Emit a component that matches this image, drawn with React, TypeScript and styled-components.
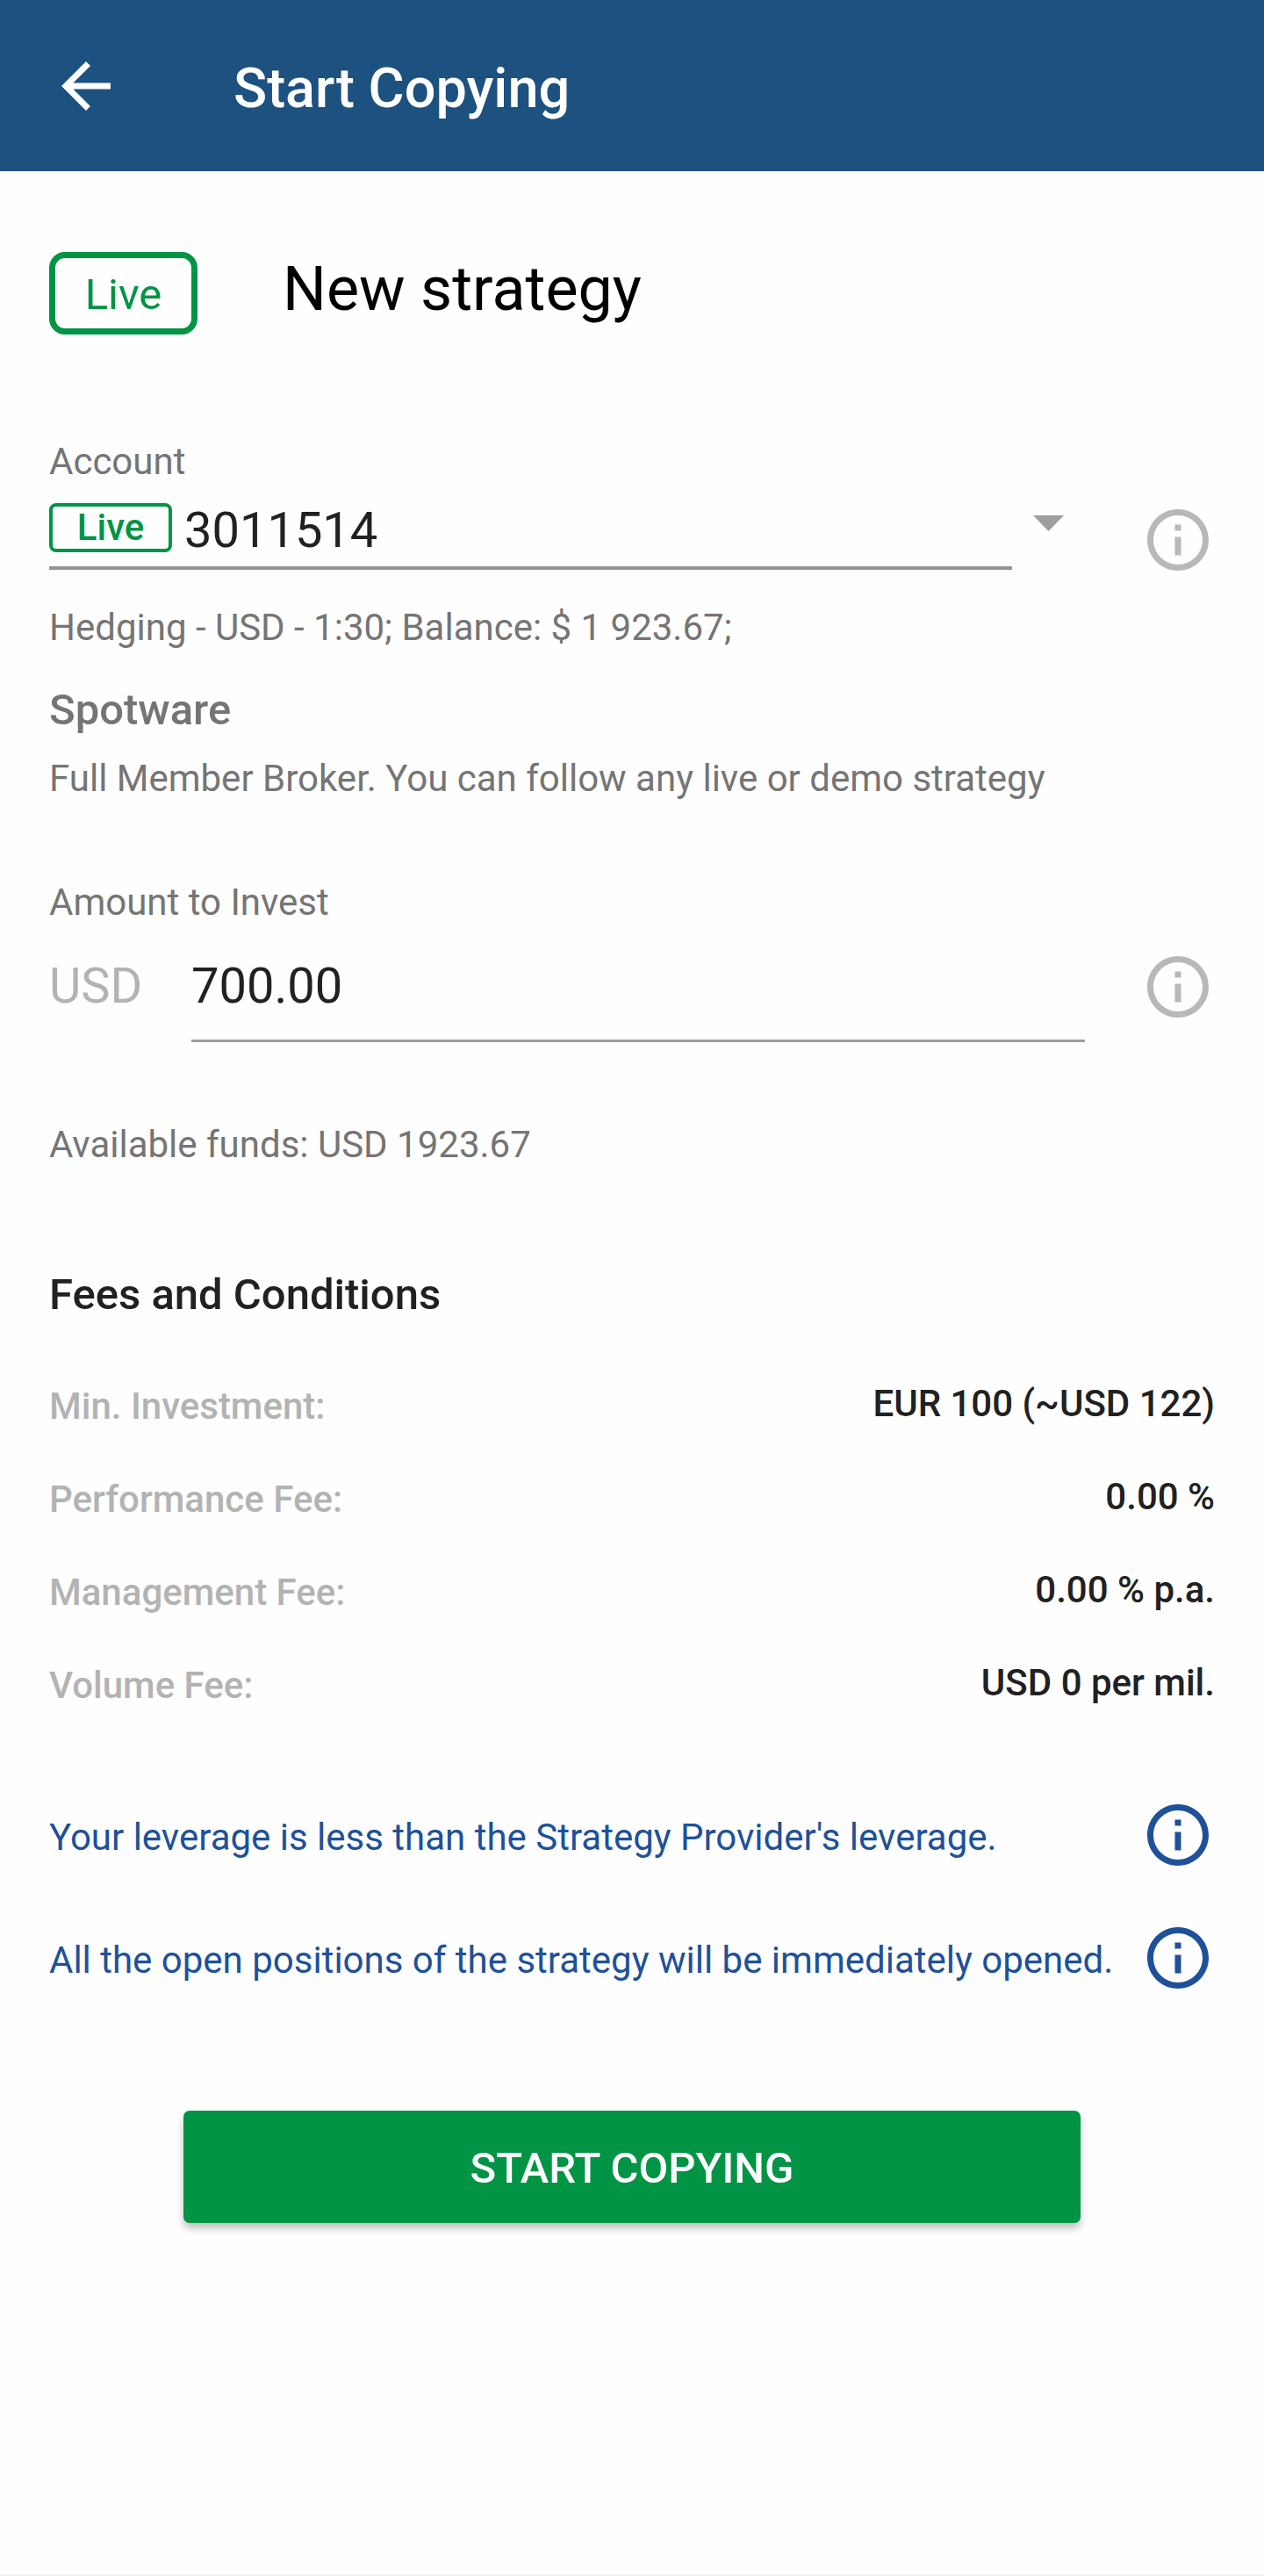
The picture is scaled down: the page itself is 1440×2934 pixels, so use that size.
import React, { useState } from "react";
import styled, { createGlobalStyle } from "styled-components";

const colors = {
  header: "#1c5180",
  green: "#009444",
  text: "#212121",
  secondary: "#757575",
  muted: "#b3b3b3",
  icon: "#b8b8b8",
  line: "#949494",
  link: "#1e5199",
};

const GlobalStyle = createGlobalStyle`
  *, *::before, *::after { box-sizing: border-box; }
  body {
    margin: 0;
    background: #fefefe;
    color: ${colors.text};
    font-family: Roboto, "Liberation Sans", sans-serif;
  }
  button, input, select { font: inherit; color: inherit; }
`;

const Page = styled.div`
  display: flex;
  flex-direction: column;
  min-height: 100vh;
  border-bottom: 2px solid #f1f1f1;
`;

const Header = styled.header`
  display: flex;
  align-items: center;
  gap: 126px;
  height: 195px;
  padding: 0 56px;
  background: ${colors.header};
  color: #fff;
`;

const Title = styled.h1`
  margin: 0;
  padding-top: 6px;
  font-size: 63px;
  line-height: 74px;
  font-weight: 500;
`;

const IconButton = styled.button<{ $color?: string }>`
  flex: none;
  display: flex;
  padding: 0;
  border: 0;
  background: none;
  color: ${(p) => p.$color ?? "inherit"};
  cursor: pointer;
`;

const Icon = styled.svg`
  display: block;
  width: 84px;
  height: 84px;
  fill: currentColor;
`;

const Content = styled.main`
  display: flex;
  flex-direction: column;
  padding: 92px 56px 56px;
`;

const Strategy = styled.section`
  display: flex;
  align-items: flex-start;
  gap: 97px;
`;

const Badge = styled.span<{ $large?: boolean }>`
  flex: none;
  display: flex;
  align-items: center;
  justify-content: center;
  width: ${(p) => (p.$large ? 169 : 140)}px;
  height: ${(p) => (p.$large ? 94 : 56)}px;
  padding-top: ${(p) => (p.$large ? 4 : 0)}px;
  border: ${(p) => (p.$large ? 7 : 4)}px solid ${colors.green};
  border-radius: ${(p) => (p.$large ? 18 : 8)}px;
  color: ${colors.green};
  font-size: ${(p) => (p.$large ? 49 : 42)}px;
  line-height: 50px;
  font-weight: ${(p) => (p.$large ? 400 : 500)};
`;

const StrategyName = styled.h2`
  margin: 0;
  color: #000;
  font-size: 70px;
  line-height: 84px;
  font-weight: 400;
`;

const Field = styled.section<{ $top: number }>`
  display: flex;
  flex-direction: column;
  margin-top: ${(p) => p.$top}px;
`;

const Label = styled.label`
  color: ${colors.secondary};
  font-size: 42px;
  line-height: 50px;
`;

const Control = styled.div<{ $top: number }>`
  display: flex;
  align-items: flex-start;
  margin-top: ${(p) => p.$top}px;
`;

const SelectBox = styled.div`
  flex: 1;
  min-width: 0;
  display: flex;
  gap: 14px;
  padding-bottom: 10px;
  border-bottom: 4px solid ${colors.line};
`;

const Select = styled.select`
  flex: 1;
  min-width: 0;
  height: 62px;
  padding: 0;
  border: 0;
  outline: 0;
  background: none;
  appearance: none;
  font-size: 56px;
  line-height: 62px;
`;

const Caret = styled.svg`
  flex: none;
  width: 35px;
  height: 18px;
  margin: 14px 88px 0 24px;
  fill: #9e9e9e;
`;

const Hint = styled.p<{ $top: number }>`
  margin: ${(p) => p.$top}px 0 0;
  color: ${colors.secondary};
  font-size: 42px;
  line-height: 50px;
`;

const Heading = styled.h3<{ $top: number; $muted?: boolean }>`
  margin: ${(p) => p.$top}px 0 0;
  color: ${(p) => (p.$muted ? colors.secondary : colors.text)};
  font-size: 49px;
  line-height: 58px;
  font-weight: 500;
`;

const Currency = styled.span`
  flex: none;
  width: 162px;
  color: ${colors.muted};
  font-size: 56px;
  line-height: 82px;
`;

const AmountInput = styled.input`
  flex: 1;
  min-width: 0;
  height: 105px;
  margin-right: 64px;
  padding: 0 0 20px;
  border: 0;
  border-bottom: 3px solid #9e9e9e;
  border-radius: 0;
  outline: 0;
  background: none;
  font-size: 56px;
  line-height: 82px;
`;

const FeeTable = styled.table`
  width: 100%;
  margin-top: 70px;
  border-collapse: collapse;
  font-size: 42px;
  line-height: 50px;
`;

const FeeRow = styled.tr`
  height: 106px;
  vertical-align: top;
`;

const FeeName = styled.th`
  padding: 3px 0 0;
  color: ${colors.muted};
  font-weight: 500;
  text-align: left;
`;

const FeeValue = styled.td`
  padding: 0;
  font-weight: 500;
  text-align: right;
`;

const Notes = styled.section`
  display: flex;
  flex-direction: column;
  gap: 56px;
  margin-top: 50px;
`;

const Note = styled.div`
  display: flex;
  align-items: center;
  justify-content: space-between;
  color: ${colors.link};
`;

const NoteText = styled.p`
  margin: 0;
  padding-top: 6px;
  font-size: 42px;
  line-height: 50px;
`;

const SubmitButton = styled.button`
  height: 128px;
  margin: 132px 153px 0;
  padding: 4px 0 0;
  border: 0;
  border-radius: 7px;
  background: ${colors.green};
  box-shadow: 0 6px 8px rgba(0, 0, 0, 0.24);
  color: #fff;
  font-size: 49px;
  line-height: 58px;
  font-weight: 500;
  cursor: pointer;
`;

const fees = [
  { name: "Min. Investment:", value: "EUR 100 (~USD 122)" },
  { name: "Performance Fee:", value: "0.00 %" },
  { name: "Management Fee:", value: "0.00 % p.a." },
  { name: "Volume Fee:", value: "USD 0 per mil." },
];

const notes = [
  "Your leverage is less than the Strategy Provider's leverage.",
  "All the open positions of the strategy will be immediately opened.",
];

function InfoButton({ label, color }: { label: string; color: string }) {
  return (
    <IconButton type="button" aria-label={label} $color={color}>
      <Icon viewBox="0 0 24 24" aria-hidden="true">
        <path d="M11 7h2v2h-2V7zm0 4h2v6h-2v-6zm1-9C6.480 2 2 6.480 2 12s4.480 10 10 10 10-4.480 10-10S17.520 2 12 2zm0 18c-4.410 0-8-3.590-8-8s3.590-8 8-8 8 3.590 8 8-3.590 8-8 8z" />
      </Icon>
    </IconButton>
  );
}

export default function App() {
  const [amount, setAmount] = useState("700.00");

  return (
    <>
      <GlobalStyle />
      <Page>
        <Header>
          <IconButton type="button" aria-label="Back">
            <Icon viewBox="0 0 24 24" aria-hidden="true">
              <path d="M20 11H7.830l5.590-5.590L12 4l-8 8 8 8 1.410-1.410L7.830 13H20v-2z" />
            </Icon>
          </IconButton>
          <Title>Start Copying</Title>
        </Header>

        <Content>
          <Strategy>
            <Badge $large>Live</Badge>
            <StrategyName>New strategy</StrategyName>
          </Strategy>

          <Field $top={120}>
            <Label htmlFor="account">Account</Label>
            <Control $top={22}>
              <SelectBox>
                <Badge>Live</Badge>
                <Select id="account" defaultValue="3011514">
                  <option value="3011514">3011514</option>
                </Select>
              </SelectBox>
              <Caret viewBox="7 10 10 5" preserveAspectRatio="none" aria-hidden="true">
                <path d="M7 10l5 5 5-5z" />
              </Caret>
              <InfoButton label="About the account" color={colors.icon} />
            </Control>
            <Hint $top={33}>Hedging - USD - 1:30; Balance: $ 1 923.67;</Hint>
            <Heading $top={40} $muted>
              Spotware
            </Heading>
            <Hint $top={24}>Full Member Broker. You can follow any live or demo strategy</Hint>
          </Field>

          <Field $top={91}>
            <Label htmlFor="amount">Amount to Invest</Label>
            <Control $top={29}>
              <Currency>USD</Currency>
              <AmountInput
                id="amount"
                inputMode="decimal"
                value={amount}
                onChange={(e) => setAmount(e.target.value)}
              />
              <InfoButton label="About the amount" color={colors.icon} />
            </Control>
            <Hint $top={92}>Available funds: USD 1923.67</Hint>
          </Field>

          <Heading $top={117}>Fees and Conditions</Heading>
          <FeeTable>
            <tbody>
              {fees.map((fee) => (
                <FeeRow key={fee.name}>
                  <FeeName scope="row">{fee.name}</FeeName>
                  <FeeValue>{fee.value}</FeeValue>
                </FeeRow>
              ))}
            </tbody>
          </FeeTable>

          <Notes>
            {notes.map((note) => (
              <Note key={note}>
                <NoteText>{note}</NoteText>
                <InfoButton label="More information" color={colors.link} />
              </Note>
            ))}
          </Notes>

          <SubmitButton type="button">START COPYING</SubmitButton>
        </Content>
      </Page>
    </>
  );
}
